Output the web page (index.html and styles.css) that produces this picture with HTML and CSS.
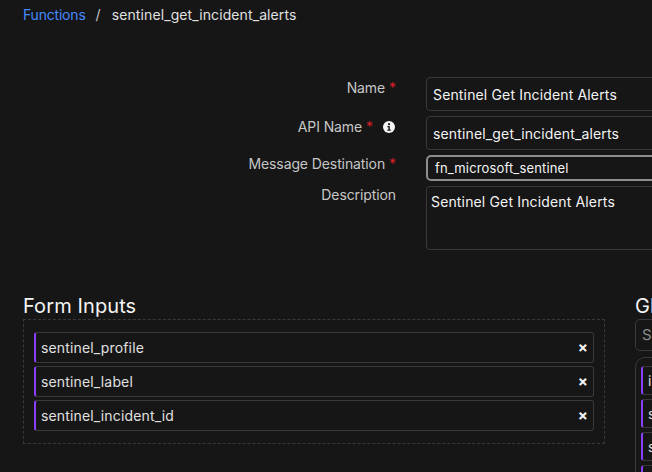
FILE: index.html
```html
<!DOCTYPE html>
<html>
<head>
<meta charset="utf-8">
<link rel="stylesheet" href="styles.css">
</head>
<body>
<div class="page">
  <nav class="crumbs">
    <a class="crumb-link">Functions</a><span class="sep">/</span><span class="crumb-cur">sentinel_get_incident_alerts</span>
  </nav>

  <div class="form">
    <div class="label">Name <span class="req">*</span></div>
    <div class="field input">Sentinel Get Incident Alerts</div>

    <div class="label">API Name <span class="req">*</span>
      <svg class="info" width="12" height="12" viewBox="0 0 12 12"><circle cx="6" cy="6" r="6" fill="#f4f4f4"/><circle cx="6" cy="3.2" r="1.1" fill="#161616"/><path d="M4.4 5h2.4v3.6h1v1.2H4.4V8.6h1V6.2h-1z" fill="#161616"/></svg>
    </div>
    <div class="field input">sentinel_get_incident_alerts</div>

    <div class="label lab-select">Message Destination <span class="req">*</span></div>
    <div class="field select">fn_microsoft_sentinel</div>

    <div class="label lab-desc">Description</div>
    <div class="field textarea">Sentinel Get Incident Alerts</div>
  </div>

  <div class="columns">
    <section class="col-left">
      <h2 class="heading">Form Inputs</h2>
      <div class="dropzone">
        <div class="item"><span>sentinel_profile</span><span class="x">×</span></div>
        <div class="item"><span>sentinel_label</span><span class="x">×</span></div>
        <div class="item"><span>sentinel_incident_id</span><span class="x">×</span></div>
      </div>
    </section>
    <section class="col-right">
      <h2 class="heading">Global Inputs</h2>
      <div class="search">Search</div>
      <div class="list">
        <div class="item small"><span>incident_id</span></div>
        <div class="item small"><span>sentinel_label</span></div>
        <div class="item small"><span>sentinel_profile</span></div>
        <div class="item small"><span>sentinel_query</span></div>
      </div>
    </section>
  </div>
</div>
</body>
</html>
```

FILE: styles.css
```css
html, body {
  margin: 0;
  padding: 0;
  background: #161616;
  overflow: hidden;
}
body {
  width: 652px;
  height: 472px;
  font-family: Inter, "Noto Sans", sans-serif;
  color: #f4f4f4;
}
.page {
  width: 1000px;
}
.crumbs {
  padding: 5px 0 0 23px;
  height: 20px;
  line-height: 20px;
  font-size: 14px;
  letter-spacing: 0.1px;
}
.crumb-link { color: #4589ff; letter-spacing: -0.2px; }
.sep { color: #c6c6c6; margin: 0 11px 0 10px; }
.crumb-cur { color: #e0e0e0; }

.form {
  margin-top: 52px;
  display: grid;
  grid-template-columns: 396px 400px;
  column-gap: 30px;
  row-gap: 5px;
}
.label {
  text-align: right;
  font-size: 14px;
  letter-spacing: -0.1px;
  color: #c6c6c6;
  padding-top: 1px;
  line-height: 20px;
  display: flex;
  justify-content: flex-end;
  align-items: center;
  align-self: start;
  gap: 4px;
}
.lab-select { padding-top: 0; margin-top: -1px; }
.lab-desc { padding-top: 0; margin-top: -1px; }
.req { color: #da1e28; }
.info { margin-left: 6px; margin-right: 1px; }
.field {
  box-sizing: border-box;
  border: 1px solid #393939;
  border-radius: 4px;
  font-size: 14px;
  letter-spacing: 0.15px;
  color: #f4f4f4;
  padding: 0 6px;
}
.input {
  height: 34px;
  line-height: 33px;
}
.select {
  height: 26px;
  line-height: 22px;
  border: 2px solid #8d8d8d;
  border-radius: 5px;
  font-size: 13px;
  padding: 0 7px;
}
.textarea {
  height: 64px;
  padding: 5px 4px;
  line-height: 20px;
}

.columns {
  margin-top: 43px;
  display: flex;
  gap: 30px;
  padding-left: 23px;
}
.col-left { width: 582px; }
.col-right { width: 300px; }
.heading {
  margin: 0;
  font-weight: 400;
  font-size: 20px;
  line-height: 26px;
  color: #f4f4f4;
  letter-spacing: 0.1px;
}
.dropzone {
  border: 1px dashed #393939;
  height: 125px;
  box-sizing: border-box;
  padding: 12px 10px;
  display: flex;
  flex-direction: column;
  gap: 3px;
}
.item {
  box-sizing: border-box;
  height: 31px;
  border: 1px solid #393939;
  border-left: 2px solid #8a3ffc;
  border-radius: 3px;
  display: flex;
  align-items: center;
  justify-content: space-between;
  padding: 0 5px 0 5px;
  font-size: 14px;
  color: #e0e0e0;
  letter-spacing: 0.15px;
}
.x {
  font-size: 15px;
  font-weight: 700;
  color: #f4f4f4;
}
.search {
  height: 32px;
  box-sizing: border-box;
  border: 1px solid #393939;
  border-radius: 5px;
  line-height: 30px;
  padding: 0 6px;
  font-size: 15px;
  color: #8d8d8d;
}
.list {
  margin-top: 6px;
  border: 1px solid #393939;
  border-radius: 10px;
  padding: 8px 5px;
  display: flex;
  flex-direction: column;
  gap: 4px;
}
.item.small { height: 29px; }
```
